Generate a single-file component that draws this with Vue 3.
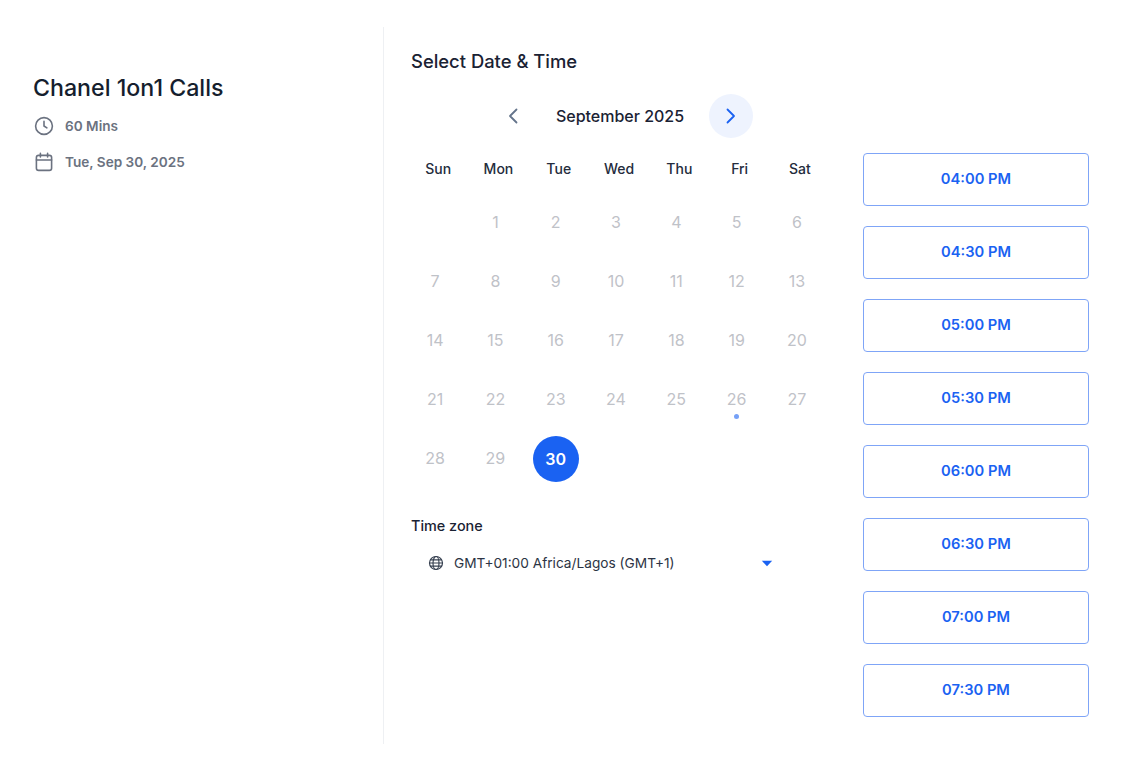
<script setup>
const weekdays = ['Sun', 'Mon', 'Tue', 'Wed', 'Thu', 'Fri', 'Sat']
const days = Array.from({ length: 30 }, (_, i) => i + 1)
const slots = ['04:00 PM', '04:30 PM', '05:00 PM', '05:30 PM', '06:00 PM', '06:30 PM', '07:00 PM', '07:30 PM']
</script>

<template>
  <div class="page">
    <aside class="summary">
      <h1>Chanel 1on1 Calls</h1>
      <div class="meta first">
        <svg class="meta-icon" width="20" height="20" viewBox="0 0 20 20" fill="none" stroke="#6b7280" stroke-width="1.6" stroke-linecap="round" stroke-linejoin="round">
          <circle cx="10" cy="10" r="8.4" />
          <path d="M10 5.4V10l2.9 1.9" />
        </svg>
        <span>60 Mins</span>
      </div>
      <div class="meta">
        <svg class="meta-icon" width="20" height="20" viewBox="0 0 20 20" fill="none" stroke="#6b7280" stroke-width="1.6" stroke-linecap="round" stroke-linejoin="round">
          <rect x="2.4" y="3.4" width="15.2" height="15" rx="2.2" />
          <path d="M2.4 8h15.2M6.4 1.4v3.6M13.6 1.4v3.6" />
        </svg>
        <span>Tue, Sep 30, 2025</span>
      </div>
    </aside>

    <main class="booking">
      <section class="calendar">
        <h2>Select Date &amp; Time</h2>
        <div class="month">
          <button class="nav prev">
            <svg width="14" height="18" viewBox="0 0 14 18" fill="none" stroke="#64748b" stroke-width="1.8" stroke-linecap="round" stroke-linejoin="round">
              <path d="M10.5 2.500 4 9l6.500 6.500" />
            </svg>
          </button>
          <span class="month-name">September 2025</span>
          <button class="nav next">
            <svg width="14" height="18" viewBox="0 0 14 18" fill="none" stroke="#1a62f2" stroke-width="1.8" stroke-linecap="round" stroke-linejoin="round">
              <path d="M3.500 2.500 10 9l-6.500 6.500" />
            </svg>
          </button>
        </div>
        <div class="weekdays">
          <span v-for="w in weekdays" :key="w">{{ w }}</span>
        </div>
        <div class="days">
          <span class="day blank" />
          <span v-for="d in days" :key="d" class="day" :class="{ selected: d === 30 }">
            {{ d }}
            <i v-if="d === 26" class="dot" />
          </span>
        </div>
        <div class="tz-label">Time zone</div>
        <div class="tz">
          <svg width="16" height="16" viewBox="0 0 16 16" fill="none" stroke="#374151" stroke-width="1.2">
            <circle cx="8" cy="8" r="6.500" />
            <ellipse cx="8" cy="8" rx="3" ry="6.500" />
            <path d="M1.500 8h13M2.400 4.800h11.200M2.400 11.200h11.200" />
          </svg>
          <span class="tz-name">GMT+01:00 Africa/Lagos (GMT+1)</span>
          <svg class="caret" width="12" height="7" viewBox="0 0 12 7"><path d="M0.800 0.800h10.400L6 6.200z" fill="#1a62f2" /></svg>
        </div>
      </section>

      <section class="slots">
        <button v-for="s in slots" :key="s" class="slot">{{ s }}</button>
      </section>
    </main>
  </div>
</template>

<style>
html, body { margin: 0; background: #fff; }
</style>

<style scoped>
.page {
  display: flex;
  width: 1139px;
  height: 769px;
  padding-top: 27px;
  box-sizing: border-box;
  overflow: hidden;
  font-family: Inter, "Noto Sans", sans-serif;
  color: #1a2233;
}
.summary {
  width: 384px;
  height: 717px;
  box-sizing: border-box;
  padding: 46px 0 0 33px;
  border-right: 1px solid #eef0f3;
  flex: none;
}
h1 {
  margin: 0;
  font-size: 23.2px;
  line-height: 30px;
  font-weight: 500;
  color: #151e2e;
}
.meta {
  display: flex;
  align-items: center;
  gap: 11px;
  height: 20px;
  margin-top: 16px;
  font-size: 13.6px;
  font-weight: 600;
  color: #6b7280;
}
.meta-icon { margin-left: 1px; }
.meta.first { margin-top: 13px; }
.booking {
  display: flex;
  padding-left: 27px;
}
.calendar {
  width: 452px;
  flex: none;
}
h2 {
  margin: 0;
  padding-top: 22px;
  font-size: 18.4px;
  line-height: 24px;
  font-weight: 500;
  color: #1a2233;
}
.month {
  display: flex;
  align-items: center;
  margin-top: 21px;
  padding-left: 80px;
  height: 44px;
}
.month-name {
  width: 132px;
  text-align: center;
  font-size: 16px;
  font-weight: 500;
  color: #1a2233;
  white-space: nowrap;
}
.nav {
  width: 44px;
  height: 44px;
  padding: 0;
  border: none;
  border-radius: 50%;
  background: transparent;
  display: flex;
  align-items: center;
  justify-content: center;
}
.nav.prev { margin-right: 19px; }
.nav.next { margin-left: 23px; background: #eef3fe; }
.weekdays {
  display: grid;
  grid-template-columns: repeat(7, 60.3px);
  margin: 19px 0 0 -3px;
  height: 24px;
  line-height: 24px;
  text-align: center;
  font-size: 14px;
  font-weight: 500;
  color: #242c3c;
}
.days {
  display: grid;
  grid-template-columns: repeat(7, 60.3px);
  grid-auto-rows: 59px;
  margin: 11.5px 0 0 -6px;
}
.day {
  position: relative;
  display: flex;
  align-items: center;
  justify-content: center;
  font-size: 16px;
  color: #bfc2c8;
}
.day.selected {
  width: 46px;
  height: 46px;
  margin: 7px 0 0 7px;
  border-radius: 50%;
  background: #1a62f2;
  color: #fff;
  font-weight: 600;
}
.dot {
  position: absolute;
  left: 50%;
  top: 44.5px;
  width: 5px;
  height: 5px;
  margin-left: -3px;
  border-radius: 50%;
  background: #76a1f7;
}
.tz-label {
  margin-top: 28.5px;
  font-size: 14.4px;
  line-height: 20px;
  font-weight: 500;
  color: #1a2233;
}
.tz {
  display: flex;
  align-items: center;
  width: 345px;
  height: 24px;
  margin-top: 15px;
  padding-left: 17px;
  font-size: 13.7px;
  color: #2c3444;
}
.tz-name {
  margin-left: 10px;
  flex: 1;
  white-space: nowrap;
}
.slots {
  display: flex;
  flex-direction: column;
  gap: 20px;
  padding-top: 126px;
}
.slot {
  width: 226px;
  height: 53px;
  padding: 0 0 2px;
  box-sizing: border-box;
  border: 1px solid #7fa5f7;
  border-radius: 4px;
  background: #fff;
  font-family: inherit;
  font-size: 14.7px;
  font-weight: 600;
  color: #1a62f2;
}
</style>
